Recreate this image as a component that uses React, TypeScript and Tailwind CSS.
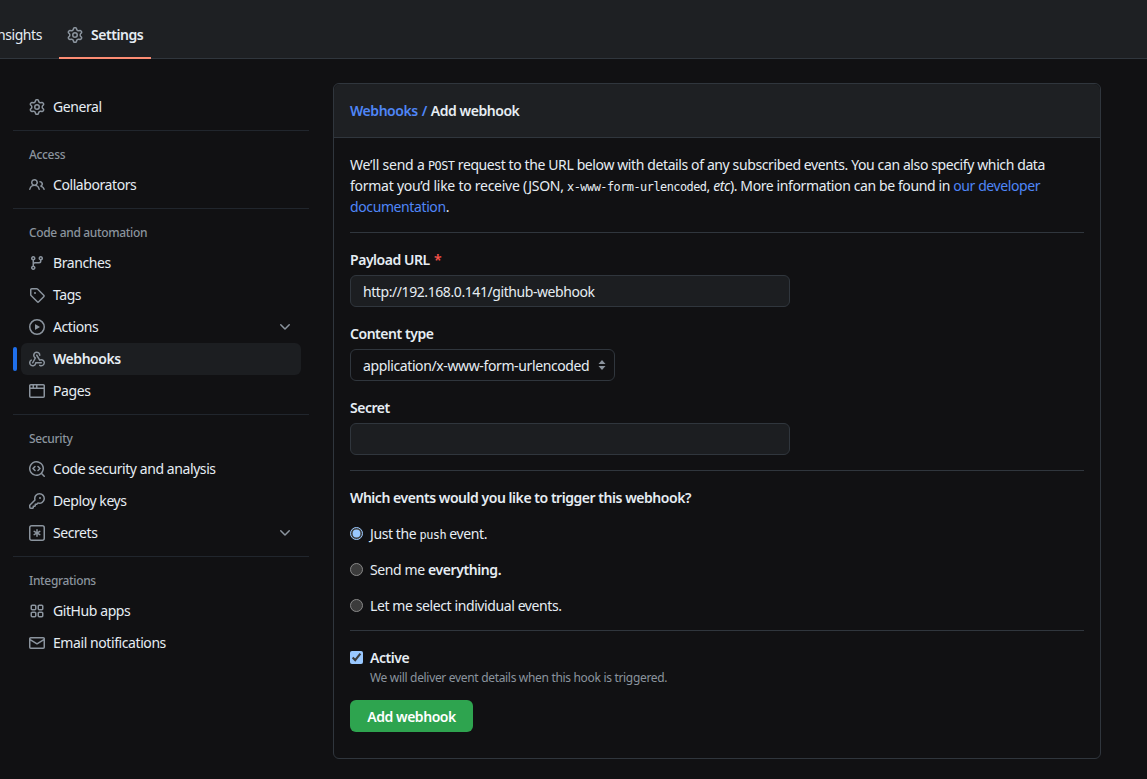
import React from "react";

type IconProps = { size?: number; className?: string };

function Octicon({ size = 16, className, d }: IconProps & { d: string }) {
  return (
    <svg viewBox="0 0 16 16" width={size} height={size} fill="currentColor" className={className}>
      <path d={d} />
    </svg>
  );
}

const makeIcon = (d: string) => (props: IconProps) => <Octicon {...props} d={d} />;

const GearIcon = makeIcon(
  "M8 0a8.2 8.2 0 0 1 .701.031C9.444.095 9.99.645 10.16 1.29l.288 1.107c.018.066.079.158.212.224.231.114.454.243.668.386.123.082.233.09.299.071l1.103-.303c.644-.176 1.392.021 1.82.63.27.385.506.792.704 1.218.315.675.111 1.422-.364 1.891l-.814.806c-.049.048-.098.147-.088.294.016.257.016.515 0 .772-.01.147.038.246.088.294l.814.806c.475.469.679 1.216.364 1.891a7.977 7.977 0 0 1-.704 1.217c-.428.61-1.176.807-1.82.63l-1.102-.302c-.067-.019-.177-.011-.3.071a5.909 5.909 0 0 1-.668.386c-.133.066-.194.158-.211.224l-.29 1.106c-.168.646-.715 1.196-1.458 1.26a8.006 8.006 0 0 1-1.402 0c-.743-.064-1.289-.614-1.458-1.26l-.289-1.106c-.018-.066-.079-.158-.212-.224a5.738 5.738 0 0 1-.668-.386c-.123-.082-.233-.09-.299-.071l-1.103.303c-.644.176-1.392-.021-1.82-.63a8.12 8.12 0 0 1-.704-1.218c-.315-.675-.111-1.422.363-1.891l.815-.806c.05-.048.098-.147.088-.294a6.214 6.214 0 0 1 0-.772c.01-.147-.038-.246-.088-.294l-.815-.806C.635 6.045.431 5.298.746 4.623a7.92 7.92 0 0 1 .704-1.217c.428-.61 1.176-.807 1.82-.63l1.102.302c.067.019.177.011.3-.071.214-.143.437-.272.668-.386.133-.066.194-.158.211-.224l.29-1.106C6.009.645 6.556.095 7.299.03 7.53.01 7.764 0 8 0Zm-.571 1.525c-.036.003-.108.036-.137.146l-.289 1.105c-.147.561-.549.967-.998 1.189-.173.086-.34.183-.5.29-.417.278-.97.423-1.529.27l-1.103-.303c-.109-.03-.175.016-.195.045-.22.312-.412.644-.573.99-.014.031-.021.11.059.19l.815.806c.411.406.562.957.53 1.456a4.709 4.709 0 0 0 0 .582c.032.499-.119 1.05-.53 1.456l-.815.806c-.081.08-.073.159-.059.19.162.346.353.677.573.989.02.03.085.076.195.046l1.102-.303c.56-.153 1.113-.008 1.53.27.161.107.328.204.501.29.447.222.85.629.997 1.189l.289 1.105c.029.109.101.143.137.146a6.6 6.6 0 0 0 1.142 0c.036-.003.108-.036.137-.146l.289-1.105c.147-.561.549-.967.998-1.189.173-.086.34-.183.5-.29.417-.278.97-.423 1.529-.27l1.103.303c.109.029.175-.016.195-.045.22-.313.411-.644.573-.99.014-.031.021-.11-.059-.19l-.815-.806c-.411-.406-.562-.957-.53-1.456a4.709 4.709 0 0 0 0-.582c-.032-.499.119-1.05.53-1.456l.815-.806c.081-.08.073-.159.059-.19a6.464 6.464 0 0 0-.573-.989c-.02-.03-.085-.076-.195-.046l-1.102.303c-.56.153-1.113.008-1.53-.27a4.44 4.44 0 0 0-.501-.29c-.447-.222-.85-.629-.997-1.189l-.289-1.105c-.029-.11-.101-.143-.137-.146a6.6 6.6 0 0 0-1.142 0ZM11 8a3 3 0 1 1-6 0 3 3 0 0 1 6 0ZM9.5 8a1.5 1.5 0 1 0-3.001.001A1.5 1.5 0 0 0 9.5 8Z"
);
const PeopleIcon = makeIcon(
  "M2 5.5a3.5 3.5 0 1 1 5.898 2.549 5.508 5.508 0 0 1 3.034 4.084.75.75 0 1 1-1.482.235 4 4 0 0 0-7.9 0 .75.75 0 0 1-1.482-.236A5.507 5.507 0 0 1 3.102 8.05 3.493 3.493 0 0 1 2 5.5ZM11 4a3.001 3.001 0 0 1 2.22 5.018 5.01 5.01 0 0 1 2.56 3.012.749.749 0 0 1-.885.954.752.752 0 0 1-.549-.514 3.507 3.507 0 0 0-2.522-2.372.75.75 0 0 1-.574-.73v-.352a.75.75 0 0 1 .416-.672A1.5 1.5 0 0 0 11 5.5.75.75 0 0 1 11 4Zm-5.5-.5a2 2 0 1 0-.001 3.999A2 2 0 0 0 5.5 3.5Z"
);
const BranchIcon = makeIcon(
  "M9.5 3.25a2.25 2.25 0 1 1 3 2.122V6A2.5 2.5 0 0 1 10 8.5H6a1 1 0 0 0-1 1v1.128a2.251 2.251 0 1 1-1.5 0V5.372a2.25 2.25 0 1 1 1.5 0v1.836A2.493 2.493 0 0 1 6 7h4a1 1 0 0 0 1-1v-.628A2.25 2.25 0 0 1 9.5 3.25Zm-6 0a.75.75 0 1 0 1.5 0 .75.75 0 0 0-1.5 0Zm8.25-.75a.75.75 0 1 0 0 1.5.75.75 0 0 0 0-1.5ZM4.25 12a.75.75 0 1 0 0 1.5.75.75 0 0 0 0-1.5Z"
);
const TagIcon = makeIcon(
  "M1 7.775V2.75C1 1.784 1.784 1 2.75 1h5.025c.464 0 .91.184 1.238.513l6.25 6.25a1.75 1.75 0 0 1 0 2.474l-5.026 5.026a1.75 1.75 0 0 1-2.474 0l-6.25-6.25A1.752 1.752 0 0 1 1 7.775Zm1.5 0c0 .066.026.13.073.177l6.25 6.25a.25.25 0 0 0 .354 0l5.025-5.025a.25.25 0 0 0 0-.354l-6.25-6.25a.25.25 0 0 0-.177-.073H2.75a.25.25 0 0 0-.25.25ZM6 5a1 1 0 1 1 0 2 1 1 0 0 1 0-2Z"
);
const PlayIcon = makeIcon(
  "M8 0a8 8 0 1 1 0 16A8 8 0 0 1 8 0ZM1.5 8a6.5 6.5 0 1 0 13 0 6.5 6.5 0 0 0-13 0Zm4.879-2.773 4.264 2.559a.25.25 0 0 1 0 .428l-4.264 2.559A.25.25 0 0 1 6 10.559V5.442a.25.25 0 0 1 .379-.215Z"
);
const WebhookIcon = makeIcon(
  "M5.5 4.25a2.25 2.25 0 0 1 4.5 0 .75.75 0 0 0 1.5 0 3.75 3.75 0 1 0-6.14 2.889l-2.272 4.258a.75.75 0 0 0 1.324.706L7 7.25a.75.75 0 0 0-.309-1.015A2.25 2.25 0 0 1 5.5 4.25ZM7.364 3.607a.75.75 0 0 1 1.03.257l2.608 4.349a3.75 3.75 0 1 1-.628 6.785.75.75 0 0 1 .752-1.299 2.25 2.25 0 1 0-.033-3.88.75.75 0 0 1-1.03-.256L7.107 4.636a.75.75 0 0 1 .257-1.03ZM2.9 8.776A.75.75 0 0 1 2.625 9.8 2.25 2.25 0 1 0 6 11.75a.75.75 0 0 1 .75-.751h5.5a.75.75 0 0 1 0 1.5H7.425a3.751 3.751 0 1 1-5.55-3.998.75.75 0 0 1 1.024.274Z"
);
const BrowserIcon = makeIcon(
  "M0 2.75C0 1.784.784 1 1.75 1h12.5c.966 0 1.75.784 1.75 1.75v10.5A1.75 1.75 0 0 1 14.25 15H1.75A1.75 1.75 0 0 1 0 13.25ZM14.5 6h-13v7.25c0 .138.112.25.25.25h12.5a.25.25 0 0 0 .25-.25Zm-6-3.5v2h6V2.75a.25.25 0 0 0-.25-.25ZM5 2.5v2h2v-2Zm-3.25 0a.25.25 0 0 0-.25.25V4.5h2v-2Z"
);
const CodescanIcon = makeIcon(
  "M8.47 4.97a.75.75 0 0 0 0 1.06L9.94 7.5 8.47 8.97a.75.75 0 1 0 1.06 1.06l2-2a.75.75 0 0 0 0-1.06l-2-2a.75.75 0 0 0-1.06 0ZM6.53 6.03a.75.75 0 0 0-1.06-1.06l-2 2a.75.75 0 0 0 0 1.06l2 2a.75.75 0 1 0 1.06-1.06L5.06 7.5l1.47-1.47ZM12.246 13.307a7.501 7.501 0 1 1 1.06-1.06l2.474 2.473a.749.749 0 0 1-.326 1.275.749.749 0 0 1-.734-.215ZM1.5 7.5a6.002 6.002 0 0 0 3.608 5.504 6.002 6.002 0 0 0 6.486-1.117.748.748 0 0 1 .292-.293A6 6 0 1 0 1.5 7.5Z"
);
const KeyIcon = makeIcon(
  "M10.5 0a5.499 5.499 0 1 1-1.288 10.848l-.932.932a.749.749 0 0 1-.53.22H7v.75a.749.749 0 0 1-.22.53l-.5.5a.749.749 0 0 1-.53.22H5v.75a.749.749 0 0 1-.22.53l-.5.5a.749.749 0 0 1-.53.22h-2A1.75 1.75 0 0 1 0 14.25v-2c0-.199.079-.389.22-.53l4.932-4.932A5.5 5.5 0 0 1 10.5 0Zm-4 5.5c-.001.431.069.86.205 1.269a.75.75 0 0 1-.181.768L1.5 12.56v1.69c0 .138.112.25.25.25h1.69l.06-.06v-1.19a.75.75 0 0 1 .75-.75h1.19l.06-.06v-1.19a.75.75 0 0 1 .75-.75h1.19l1.023-1.025a.75.75 0 0 1 .768-.18A4 4 0 1 0 6.5 5.5ZM11 6a1 1 0 1 1 0-2 1 1 0 0 1 0 2Z"
);
const KeyAsteriskIcon = makeIcon(
  "M0 2.75A2.75 2.75 0 0 1 2.75 0h10.5A2.75 2.75 0 0 1 16 2.75v10.5A2.75 2.75 0 0 1 13.25 16H2.75A2.75 2.75 0 0 1 0 13.25ZM2.75 1.5c-.69 0-1.25.56-1.25 1.25v10.5c0 .69.56 1.25 1.25 1.25h10.5c.69 0 1.25-.56 1.25-1.25V2.75c0-.69-.56-1.25-1.25-1.25ZM8 4a.75.75 0 0 1 .75.75V6.7l1.69-.975a.75.75 0 0 1 .75 1.3L9.5 8l1.69.976a.75.75 0 0 1-.75 1.298L8.75 9.3v1.951a.75.75 0 0 1-1.5 0V9.299l-1.69.976a.75.75 0 0 1-.75-1.3L6.5 8l-1.69-.975a.75.75 0 0 1 .75-1.3l1.69.976V4.75A.75.75 0 0 1 8 4Z"
);
const AppsIcon = makeIcon(
  "M1.5 3.25c0-.966.784-1.75 1.75-1.75h2.5c.966 0 1.75.784 1.75 1.75v2.5A1.75 1.75 0 0 1 5.75 7.5h-2.5A1.75 1.75 0 0 1 1.5 5.75Zm7 0c0-.966.784-1.75 1.75-1.75h2.5c.966 0 1.75.784 1.75 1.75v2.5a1.75 1.75 0 0 1-1.75 1.75h-2.5A1.75 1.75 0 0 1 8.5 5.75Zm-7 7c0-.966.784-1.75 1.75-1.75h2.5c.966 0 1.75.784 1.75 1.75v2.5a1.75 1.75 0 0 1-1.75 1.75h-2.5a1.75 1.75 0 0 1-1.75-1.75Zm7 0c0-.966.784-1.75 1.75-1.75h2.5c.966 0 1.75.784 1.75 1.75v2.5a1.75 1.75 0 0 1-1.75 1.75h-2.5a1.75 1.75 0 0 1-1.75-1.75ZM3.25 3a.25.25 0 0 0-.25.25v2.5c0 .138.112.25.25.25h2.5A.25.25 0 0 0 6 5.75v-2.5A.25.25 0 0 0 5.75 3Zm7 0a.25.25 0 0 0-.25.25v2.5c0 .138.112.25.25.25h2.5a.25.25 0 0 0 .25-.25v-2.5a.25.25 0 0 0-.25-.25ZM3 10.25v2.5c0 .138.112.25.25.25h2.5a.25.25 0 0 0 .25-.25v-2.5a.25.25 0 0 0-.25-.25h-2.5a.25.25 0 0 0-.25.25Zm7.25-.25a.25.25 0 0 0-.25.25v2.5c0 .138.112.25.25.25h2.5a.25.25 0 0 0 .25-.25v-2.5a.25.25 0 0 0-.25-.25Z"
);
const MailIcon = makeIcon(
  "M1.75 2h12.5c.966 0 1.75.784 1.75 1.75v8.5A1.75 1.75 0 0 1 14.25 14H1.75A1.75 1.75 0 0 1 0 12.25v-8.5C0 2.784.784 2 1.75 2ZM1.5 12.251c0 .138.112.25.25.25h12.5a.25.25 0 0 0 .25-.25V5.809L8.38 9.397a.75.75 0 0 1-.76 0L1.5 5.809v6.442Zm13-8.181v-.32a.25.25 0 0 0-.25-.25H1.75a.25.25 0 0 0-.25.25v.32L8 7.88Z"
);
const ChevronDownIcon = makeIcon(
  "M12.78 5.22a.749.749 0 0 1 0 1.06l-4.25 4.25a.749.749 0 0 1-1.06 0L3.22 6.28a.749.749 0 1 1 1.06-1.06L8 8.939l3.72-3.719a.749.749 0 0 1 1.06 0Z"
);

function NavItem({ icon: Icon, label, active, chevron }: { icon: (p: IconProps) => React.ReactElement; label: string; active?: boolean; chevron?: boolean }) {
  return (
    <div className={`relative mx-2 flex h-8 items-center rounded-md px-2 text-[14px] text-[#e6edf3] ${active ? "bg-[#1c1e21] font-semibold" : ""}`}>
      {active && <span className="absolute -left-2 top-1 h-6 w-1 rounded-md bg-[#1f6feb]" />}
      <Icon size={16} className="mr-2 shrink-0 text-[#8b949e]" />
      <span className={`flex-1 pb-px ${active ? "tracking-[-0.46px]" : "tracking-[-0.42px]"}`}>{label}</span>
      {chevron && <ChevronDownIcon size={16} className="text-[#8b949e]" />}
    </div>
  );
}

function SectionLabel({ children }: { children: React.ReactNode }) {
  return <div className="mb-[5px] px-4 text-[12px] font-medium leading-[18px] tracking-[-0.34px] text-[#8b949e]">{children}</div>;
}

function Divider() {
  return <div className="mb-[15px] mt-[7px] h-px bg-[#21262d]" />;
}

function Sidebar() {
  return (
    <aside className="ml-[13px] w-[296px] shrink-0">
      <NavItem icon={GearIcon} label="General" />
      <Divider />
      <SectionLabel>Access</SectionLabel>
      <NavItem icon={PeopleIcon} label="Collaborators" />
      <Divider />
      <SectionLabel>Code and automation</SectionLabel>
      <NavItem icon={BranchIcon} label="Branches" />
      <NavItem icon={TagIcon} label="Tags" />
      <NavItem icon={PlayIcon} label="Actions" chevron />
      <NavItem icon={WebhookIcon} label="Webhooks" active />
      <NavItem icon={BrowserIcon} label="Pages" />
      <Divider />
      <SectionLabel>Security</SectionLabel>
      <NavItem icon={CodescanIcon} label="Code security and analysis" />
      <NavItem icon={KeyIcon} label="Deploy keys" />
      <NavItem icon={KeyAsteriskIcon} label="Secrets" chevron />
      <Divider />
      <SectionLabel>Integrations</SectionLabel>
      <NavItem icon={AppsIcon} label="GitHub apps" />
      <NavItem icon={MailIcon} label="Email notifications" />
    </aside>
  );
}

function Mono({ children }: { children: React.ReactNode }) {
  return <code className="font-['DejaVu_Sans_Mono',monospace] text-[11.9px] leading-none tracking-[-0.52px]">{children}</code>;
}

function FieldLabel({ children }: { children: React.ReactNode }) {
  return <label className="block text-[14px] font-semibold leading-[21px] tracking-[-0.46px] text-[#e6edf3]">{children}</label>;
}

function Radio({ checked, children }: { checked?: boolean; children: React.ReactNode }) {
  return (
    <label className="flex h-[21px] items-center text-[14px] tracking-[-0.4px] text-[#e6edf3]">
      <input type="radio" name="events" defaultChecked={checked} className="m-0 mr-[7px] size-[13px] [color-scheme:dark]" />
      <span>{children}</span>
    </label>
  );
}

export default function App() {
  return (
    <div className="h-[779px] w-[1147px] overflow-hidden bg-[#111113] font-['Noto_Sans','Liberation_Sans',sans-serif] text-[#e6edf3]">
      <header className="flex h-[59px] items-stretch border-b border-[#30363d] bg-[#1e2023] pt-3">
        <div className="flex w-[59px] shrink-0 items-center justify-end pr-[17px]">
          <span className="shrink-0 pb-px text-[14px] tracking-[-0.42px]">Insights</span>
        </div>
        <div className="relative flex w-[92px] items-center pl-2">
          <GearIcon size={16} className="mr-2 text-[#8b949e]" />
          <span className="pb-px text-[14px] font-semibold tracking-[-0.46px]">Settings</span>
          <span className="absolute -bottom-px left-0 right-0 h-0.5 bg-[#fd8c73]" />
        </div>
      </header>

      <div className="flex pt-[32px]">
        <Sidebar />
        <main className="ml-6 mt-[-8px] h-[676px] w-[768px] shrink-0 rounded-md border border-[#30363d]">
          <div className="flex h-[54px] items-center rounded-t-md border-b border-[#30363d] bg-[#1e2023] px-4 text-[14px] font-semibold tracking-[-0.46px]">
            <a className="text-[#4f86f7]">Webhooks</a>
            <span className="mx-1 text-[#4f86f7]">/</span>
            <span>Add webhook</span>
          </div>
          <div className="px-4 pt-[16px]">
            <p className="text-[14px] leading-[21px] tracking-[-0.39px]">
              <span className="tracking-[-0.22px]">We’ll send a </span>
              <Mono>POST</Mono> request to the URL below with details of any subscribed events. You can also specify which data <span className="tracking-[-0.26px]">format you’d like to receive (JSON, </span>
              <Mono>x-www-form-urlencoded</Mono>, <em>etc</em>). More information can be found in <a className="text-[#4f86f7]">our developer documentation</a>.
            </p>
            <div className="mb-4 mt-[15px] h-px bg-[#30363d]" />

            <FieldLabel>
              Payload URL <span className="ml-px text-[#f85149]">*</span>
            </FieldLabel>
            <input
              readOnly
              value="http://192.168.0.141/github-webhook"
              className="mt-[5px] block h-8 w-[440px] rounded-md border border-[#30363d] bg-[#1c1e21] px-3 text-[14px] tracking-[-0.42px] text-[#e6edf3] outline-none"
            />

            <div className="mt-4">
              <FieldLabel>Content type</FieldLabel>
            </div>
            <div className="relative mt-[5px] h-8 w-[265px]">
              <select className="block h-8 w-full appearance-none rounded-md border border-[#30363d] bg-[#111113] pl-3 pr-6 text-[14px] tracking-[-0.38px] text-[#e6edf3] outline-none">
                <option>application/x-www-form-urlencoded</option>
              </select>
              <svg viewBox="0 0 8 12" className="pointer-events-none absolute right-[9px] top-[10px] h-3 w-2 fill-[#8b949e]">
                <path d="M4 1 7.5 5H.5ZM4 11 .5 7h7Z" />
              </svg>
            </div>

            <div className="mt-4">
              <FieldLabel>Secret</FieldLabel>
            </div>
            <input className="mt-[5px] block h-8 w-[440px] rounded-md border border-[#30363d] bg-[#1c1e21] px-3 text-[14px] outline-none" />

            <div className="mb-4 mt-[15px] h-px bg-[#30363d]" />
            <div className="text-[14px] font-semibold leading-[21px] tracking-[-0.46px]">Which events would you like to trigger this webhook?</div>

            <div className="mt-[15px] flex flex-col gap-[15px]">
              <Radio checked>
                Just the <Mono>push</Mono> event.
              </Radio>
              <Radio>
                Send me <strong className="font-semibold">everything.</strong>
              </Radio>
              <Radio>Let me select individual events.</Radio>
            </div>

            <div className="mb-4 mt-[14px] h-px bg-[#30363d]" />
            <label className="flex h-[21px] items-center text-[14px] font-semibold tracking-[-0.46px]">
              <input type="checkbox" defaultChecked className="m-0 mr-[7px] size-[13px] [color-scheme:dark]" />
              Active
            </label>
            <p className="ml-5 mt-px text-[12px] leading-[18px] tracking-[-0.32px] text-[#8b949e]">We will deliver event details when this hook is triggered.</p>
            <button className="mt-[13px] h-8 w-[123px] rounded-md bg-[#2ea44f] text-[14px] font-semibold tracking-[-0.46px] text-white">Add webhook</button>
          </div>
        </main>
      </div>
    </div>
  );
}
